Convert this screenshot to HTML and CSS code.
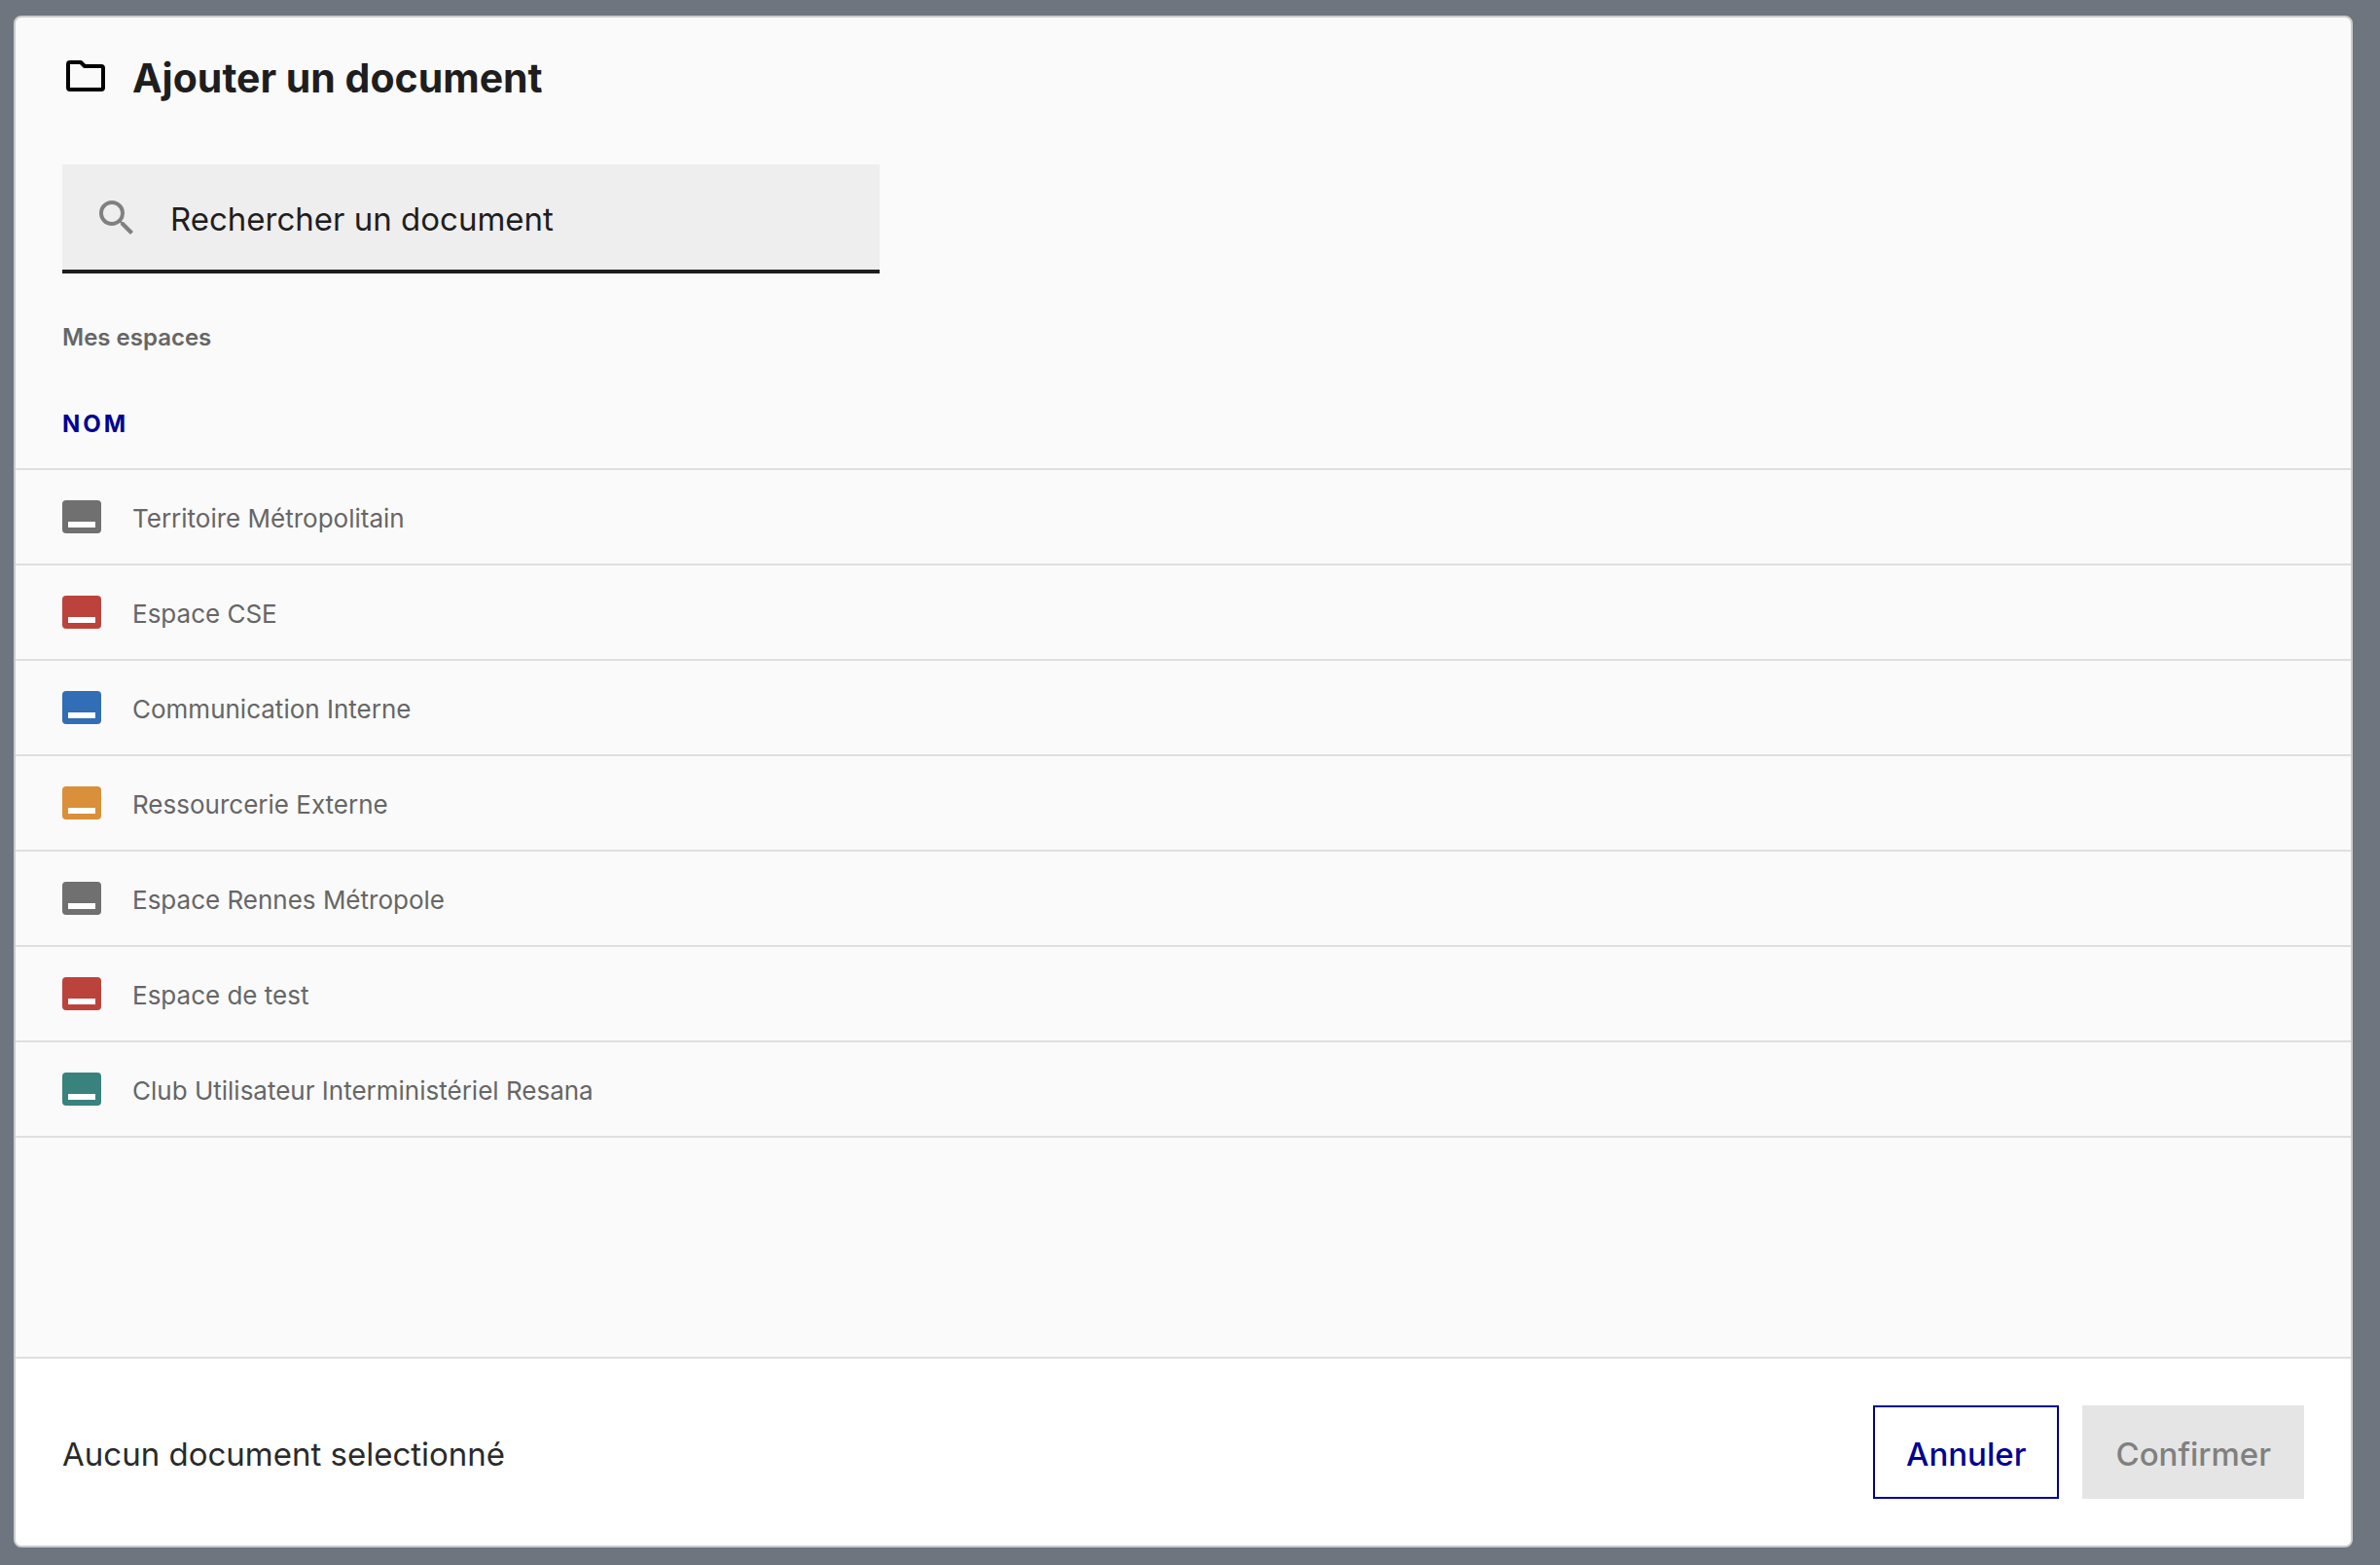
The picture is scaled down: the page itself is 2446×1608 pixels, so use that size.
FILE: index.html
```html
<!DOCTYPE html>
<html lang="fr">
<head>
  <meta charset="utf-8">
  <meta name="viewport" content="width=device-width, initial-scale=1">
  <title>Ajouter un document</title>
  <link rel="stylesheet" href="styles.css">
</head>
<body>
  <svg class="sprite" aria-hidden="true">
    <symbol id="space" viewBox="0 0 40 34">
      <rect width="40" height="34" rx="4" fill="currentColor"/>
      <path d="M6 22h28v6H6z" fill="#fff"/>
    </symbol>
  </svg>
  <main class="dialog" role="dialog" aria-labelledby="title">
    <header class="dialog-header">
      <svg class="folder-icon" viewBox="0 0 40 32" aria-hidden="true">
        <path d="M4 2h11l4 4h17q2 0 2 2v20q0 2-2 2H4q-2 0-2-2V4q0-2 2-2z" fill="none" stroke="#000" stroke-width="4" stroke-linejoin="round"/>
      </svg>
      <h1 class="title" id="title">Ajouter un document</h1>
    </header>
    <label class="search">
      <svg class="search-icon" viewBox="3 3 17.5 17.5" aria-hidden="true">
        <path d="M15.5 14h-.79l-.28-.27A6.47 6.47 0 0 0 16 9.5 6.5 6.5 0 1 0 9.5 16c1.61 0 3.09-.59 4.23-1.57l.27.28v.79l5 4.99L20.49 19l-4.99-5zm-6 0C7.01 14 5 11.99 5 9.5S7.01 5 9.5 5 14 7.01 14 9.5 11.99 14 9.5 14z" fill="#808080"/>
      </svg>
      <input class="search-input" type="text" placeholder="Rechercher un document" aria-label="Rechercher un document">
    </label>
    <h2 class="location">Mes espaces</h2>
    <table class="spaces">
      <thead>
        <tr><th scope="col">NOM</th></tr>
      </thead>
      <tbody>
        <tr><td><a class="space" href="#"><svg class="space-icon gray" aria-hidden="true"><use href="#space"/></svg><span class="space-name">Territoire Métropolitain</span></a></td></tr>
        <tr><td><a class="space" href="#"><svg class="space-icon red" aria-hidden="true"><use href="#space"/></svg><span class="space-name">Espace CSE</span></a></td></tr>
        <tr><td><a class="space" href="#"><svg class="space-icon blue" aria-hidden="true"><use href="#space"/></svg><span class="space-name">Communication Interne</span></a></td></tr>
        <tr><td><a class="space" href="#"><svg class="space-icon orange" aria-hidden="true"><use href="#space"/></svg><span class="space-name">Ressourcerie Externe</span></a></td></tr>
        <tr><td><a class="space" href="#"><svg class="space-icon gray" aria-hidden="true"><use href="#space"/></svg><span class="space-name">Espace Rennes Métropole</span></a></td></tr>
        <tr><td><a class="space" href="#"><svg class="space-icon red" aria-hidden="true"><use href="#space"/></svg><span class="space-name">Espace de test</span></a></td></tr>
        <tr><td><a class="space" href="#"><svg class="space-icon teal" aria-hidden="true"><use href="#space"/></svg><span class="space-name">Club Utilisateur Interministériel Resana</span></a></td></tr>
      </tbody>
    </table>
    <footer class="dialog-footer">
      <p class="status">Aucun document selectionné</p>
      <button class="button button-outline" type="button">Annuler</button>
      <button class="button button-primary" type="button" disabled>Confirmer</button>
    </footer>
  </main>
</body>
</html>
```

FILE: styles.css
```css
* {
  box-sizing: border-box;
}

body {
  display: flex;
  min-height: 100vh;
  margin: 0;
  padding: 16px 28px 18px 14px;
  background: #6e757f;
  color: #1e1e1e;
  font-family: Inter, sans-serif;
}

.sprite {
  position: absolute;
  width: 0;
  height: 0;
}

.dialog {
  display: flex;
  flex: 1;
  flex-direction: column;
  overflow: hidden;
  border: 2px solid #ccc;
  border-radius: 8px;
  background: #fafafa;
}

.dialog-header {
  display: flex;
  align-items: center;
  gap: 28px;
  padding: 34px 48px 0 52px;
}

.folder-icon {
  width: 40px;
  height: 32px;
}

.title {
  margin: 0;
  padding-top: 4px;
  font-size: 41px;
  line-height: 48px;
}

.search {
  display: flex;
  align-items: center;
  gap: 38px;
  max-width: 840px;
  height: 112px;
  margin: 65px 48px 0;
  padding: 0 38px;
  border-bottom: 4px solid #1e1e1e;
  background: #eee;
}

.search-icon {
  flex: none;
  width: 35px;
  height: 35px;
}

.search-input {
  flex: 1;
  min-width: 0;
  padding: 4px 0 0;
  border: 0;
  outline: 0;
  background: transparent;
  color: inherit;
  font: inherit;
  font-size: 33px;
  line-height: 40px;
}

.search-input::placeholder {
  color: inherit;
  opacity: 1;
}

.location {
  margin: 48px 48px 0;
  color: #666;
  font-size: 24px;
  font-weight: 600;
  line-height: 36px;
}

.spaces {
  width: 100%;
  border-spacing: 0;
}

.spaces th {
  height: 118px;
  padding: 24px 48px 0;
  border-bottom: 2px solid #dfdfdf;
  color: #000091;
  font-size: 24px;
  letter-spacing: 3px;
  text-align: left;
}

.spaces td {
  padding: 0;
  border-bottom: 2px solid #dfdfdf;
}

.space {
  display: flex;
  align-items: center;
  gap: 32px;
  height: 96px;
  padding: 0 48px;
  color: #666;
  font-size: 26px;
  text-decoration: none;
}

.space-name {
  padding-top: 2px;
}

.space-icon {
  flex: none;
  width: 40px;
  height: 34px;
}

.gray { color: #707070; }
.red { color: #bc433c; }
.blue { color: #316eb5; }
.orange { color: #da8f3a; }
.teal { color: #39827e; }

.dialog-footer {
  display: flex;
  align-items: center;
  gap: 24px;
  margin-top: auto;
  padding: 48px;
  border-top: 2px solid #dfdfdf;
  background: #fff;
}

.status {
  flex: 1;
  margin: 0;
  padding-top: 4px;
  color: #2a2a2a;
  font-size: 33px;
}

.button {
  height: 96px;
  padding: 4px 32px 0;
  border: 2px solid transparent;
  font: inherit;
  font-size: 33px;
  font-weight: 500;
}

.button-outline {
  border-color: #000091;
  background: #fff;
  color: #000091;
}

.button-primary {
  background: #e5e5e5;
  color: #808080;
}
```
